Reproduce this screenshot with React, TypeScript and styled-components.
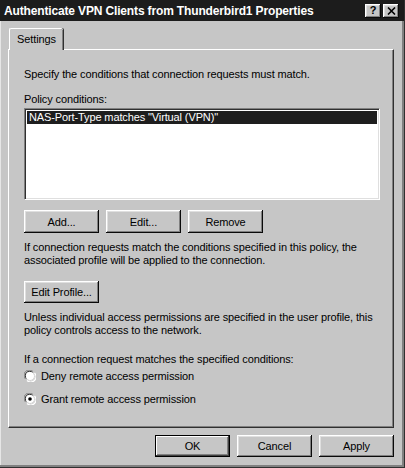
import styled, { createGlobalStyle } from "styled-components";

const Global = createGlobalStyle`
  html, body {
    margin: 0;
    padding: 0;
    background: #c6c6c6;
  }
  * { box-sizing: border-box; }
`;

const Window = styled.div`
  width: 405px;
  height: 468px;
  background: #c6c6c6;
  font-family: "Liberation Sans", Arial, sans-serif;
  font-size: 11px;
  letter-spacing: -0.12px;
  color: #000;
  display: flex;
  flex-direction: column;
  border-right: 1px solid #303030;
  border-bottom: 1px solid #303030;
  box-shadow: inset -2px -2px 0 #808080, inset 1px 0 0 #e6e6e6;
  overflow: hidden;
`;

const TitleBar = styled.div`
  height: 21px;
  background: #1c1c1c;
  display: flex;
  align-items: center;
  padding: 0 4px 0 4px;
  flex-shrink: 0;
`;

const Title = styled.div`
  flex: 1;
  color: #fff;
  font-weight: bold;
  font-size: 12px;
  letter-spacing: -0.15px;
  white-space: nowrap;
  padding-top: 1px;
`;

const CaptionButtons = styled.div`
  display: flex;
  gap: 2px;
  margin-right: 1px;
`;

const CaptionButton = styled.div`
  width: 16px;
  height: 14px;
  background: #c6c6c6;
  box-shadow: inset -1px -1px #0a0a0a, inset 1px 1px #fff, inset -2px -2px #808080, inset 2px 2px #dfdfdf;
  display: flex;
  align-items: center;
  justify-content: center;
  font-weight: bold;
  font-size: 11px;
  line-height: 1;
  color: #000;
`;

const Body = styled.div`
  flex: 1;
  display: flex;
  flex-direction: column;
  padding: 7px 10px 0 8px;
`;

const TabStrip = styled.div`
  display: flex;
  padding-left: 1px;
  position: relative;
  z-index: 1;
  margin-bottom: -1px;
`;

const Tab = styled.div`
  width: 54px;
  height: 22px;
  background: #c6c6c6;
  border-top: 1px solid #fff;
  border-left: 1px solid #fff;
  border-top-left-radius: 2px;
  border-top-right-radius: 2px;
  box-shadow: inset -1px 0 #808080, 1px 0 0 #303030;
  display: flex;
  align-items: center;
  justify-content: center;
  padding-bottom: 2px;
`;

const Panel = styled.div`
  height: 379px;
  border-top: 1px solid #fff;
  border-left: 1px solid #fff;
  border-right: 1px solid #303030;
  border-bottom: 1px solid #303030;
  box-shadow: inset -1px -1px 0 #808080;
  padding: 18px 13px 0 15px;
  display: flex;
  flex-direction: column;
`;

const Text = styled.div<{ $mt?: number }>`
  margin-top: ${(p) => p.$mt ?? 0}px;
  line-height: 13px;
  white-space: nowrap;
`;

const ListBox = styled.div`
  margin-top: 2px;
  height: 92px;
  background: #fff;
  border-top: 1px solid #808080;
  border-left: 1px solid #808080;
  border-right: 1px solid #fff;
  border-bottom: 1px solid #fff;
  box-shadow: inset 1px 1px 0 #303030, inset -1px -1px 0 #dfdfdf;
  padding: 2px;
`;

const ListItem = styled.div<{ $selected?: boolean }>`
  height: 13px;
  line-height: 13px;
  padding-left: 2px;
  background: ${(p) => (p.$selected ? "#1e1e1e" : "transparent")};
  color: ${(p) => (p.$selected ? "#fff" : "#000")};
  white-space: nowrap;
`;

const ButtonRow = styled.div<{ $mt?: number }>`
  display: flex;
  gap: 7px;
  margin-top: ${(p) => p.$mt ?? 0}px;
`;

const Button = styled.div<{ $default?: boolean; $h?: number }>`
  width: 75px;
  height: ${(p) => p.$h ?? 23}px;
  background: #c6c6c6;
  display: flex;
  align-items: center;
  justify-content: center;
  box-shadow: ${(p) =>
    p.$default
      ? "inset 0 0 0 1px #000, inset -2px -2px #404040, inset 2px 2px #fff, inset -3px -3px #808080"
      : "inset -1px -1px #0a0a0a, inset 1px 1px #fff, inset -2px -2px #808080, inset 2px 2px #dfdfdf"};
  white-space: nowrap;
`;

const RadioRow = styled.div<{ $mt?: number }>`
  display: flex;
  align-items: center;
  gap: 5px;
  margin-top: ${(p) => p.$mt ?? 0}px;
  height: 14px;
`;

const Footer = styled.div`
  display: flex;
  justify-content: flex-end;
  gap: 7px;
  padding-top: 7px;
`;

const Radio = ({ checked }: { checked?: boolean }) => (
  <svg width="12" height="12" viewBox="0 0 12 12">
    <path d="M1.5 9 A5 5 0 0 1 9 1.5" fill="none" stroke="#808080" strokeWidth="1" />
    <path d="M2.5 8.5 A4 4 0 0 1 8.5 2.5" fill="none" stroke="#303030" strokeWidth="1" />
    <circle cx="6" cy="6" r="4" fill="#fff" />
    <path d="M10.5 3 A5 5 0 0 1 3 10.5" fill="none" stroke="#fff" strokeWidth="1.2" />
    <path d="M9.5 3.5 A4 4 0 0 1 3.5 9.5" fill="none" stroke="#dfdfdf" strokeWidth="1" />
    {checked && <circle cx="6" cy="6" r="1.8" fill="#000" />}
  </svg>
);

const CloseGlyph = () => (
  <svg width="9" height="8" viewBox="0 0 9 8">
    <path d="M1 0.5 L8 7.5 M8 0.5 L1 7.5" stroke="#000" strokeWidth="1.6" />
  </svg>
);

export default function App() {
  return (
    <>
      <Global />
      <Window>
        <TitleBar>
          <Title>Authenticate VPN Clients from Thunderbird1 Properties</Title>
          <CaptionButtons>
            <CaptionButton>?</CaptionButton>
            <CaptionButton>
              <CloseGlyph />
            </CaptionButton>
          </CaptionButtons>
        </TitleBar>
        <Body>
          <TabStrip>
            <Tab>Settings</Tab>
          </TabStrip>
          <Panel>
            <Text>Specify the conditions that connection requests must match.</Text>
            <Text $mt={12}>Policy conditions:</Text>
            <ListBox>
              <ListItem $selected>NAS-Port-Type matches "Virtual (VPN)"</ListItem>
            </ListBox>
            <ButtonRow $mt={10}>
              <Button>Add...</Button>
              <Button>Edit...</Button>
              <Button>Remove</Button>
            </ButtonRow>
            <Text $mt={8}>
              If connection requests match the conditions specified in this policy, the
              <br />
              associated profile will be applied to the connection.
            </Text>
            <ButtonRow $mt={14}>
              <Button $h={22}>Edit Profile...</Button>
            </ButtonRow>
            <Text $mt={8}>
              Unless individual access permissions are specified in the user profile, this
              <br />
              policy controls access to the network.
            </Text>
            <Text $mt={16}>If a connection request matches the specified conditions:</Text>
            <RadioRow $mt={3}>
              <Radio />
              <span>Deny remote access permission</span>
            </RadioRow>
            <RadioRow $mt={9}>
              <Radio checked />
              <span>Grant remote access permission</span>
            </RadioRow>
          </Panel>
          <Footer>
            <Button $default $h={22}>OK</Button>
            <Button $h={22}>Cancel</Button>
            <Button $h={22}>Apply</Button>
          </Footer>
        </Body>
      </Window>
    </>
  );
}
